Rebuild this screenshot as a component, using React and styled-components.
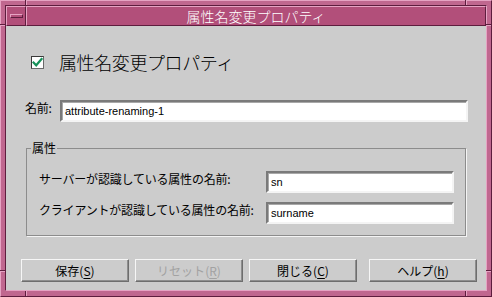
import React from 'react';
import styled, { createGlobalStyle } from 'styled-components';

const LIGHT = '#e6a3c3';
const DARK = '#5e1d3e';
const PINK = '#c0678f';
const TITLE = '#b24f7a';
const GRAY = '#cccccc';

const Global = createGlobalStyle`
  html, body { margin: 0; padding: 0; background: ${PINK}; }
  body { font-family: "Noto Sans CJK JP", "Liberation Sans", sans-serif; }
  * { box-sizing: border-box; }
`;

const Frame = styled.div`
  position: relative;
  width: 492px;
  height: 297px;
  background: ${PINK};
  border: 1px solid;
  border-color: ${LIGHT} ${DARK} ${DARK} ${LIGHT};
  padding: 4px 4px 5px 4px;
  display: flex;
`;

const Mark = styled.span`
  position: absolute;
  background: ${(p) => p.$c};
  width: ${(p) => (p.$v ? '1px' : '5px')};
  height: ${(p) => (p.$v ? '5px' : '1px')};
`;

const Inner = styled.div`
  flex: 1;
  display: flex;
  flex-direction: column;
  border: 1px solid;
  border-color: ${DARK} ${LIGHT} ${LIGHT} ${DARK};
`;

const TitleBar = styled.div`
  height: 20px;
  display: flex;
  background: ${TITLE};
`;

const MenuButton = styled.div`
  width: 20px;
  display: flex;
  align-items: center;
  justify-content: center;
  border: 1px solid;
  border-color: ${LIGHT} ${DARK} ${DARK} ${LIGHT};
`;

const MenuBar = styled.div`
  width: 13px;
  height: 4px;
  border: 1px solid;
  border-color: ${LIGHT} ${DARK} ${DARK} ${LIGHT};
`;

const TitleArea = styled.div`
  flex: 1;
  display: flex;
  align-items: center;
  justify-content: center;
  color: #ffffff;
  font-size: 14px;
  font-weight: 300;
  line-height: 18px;
  border: 1px solid;
  border-color: ${LIGHT} ${DARK} ${DARK} ${LIGHT};
`;

const Content = styled.div`
  flex: 1;
  background: ${GRAY};
  display: flex;
  flex-direction: column;
  color: #000;
`;

const CheckRow = styled.div`
  margin-top: 24px;
  height: 24px;
  padding-left: 25px;
  display: flex;
  align-items: center;
  gap: 15px;
`;

const CheckBox = styled.span`
  width: 13px;
  height: 13px;
  background: #ffffff;
  border: 1px solid;
  border-color: #3a3a3a #6a6a6a #6a6a6a #3a3a3a;
  display: flex;
  align-items: center;
  justify-content: center;
`;

const Heading = styled.span`
  font-size: 18px;
  font-weight: 300;
  line-height: 24px;
  letter-spacing: -0.4px;
`;

const FieldRow = styled.div`
  display: flex;
  align-items: center;
  height: 22px;
  margin-top: ${(p) => p.$top || 0}px;
  padding-left: ${(p) => p.$left || 0}px;
  padding-right: ${(p) => p.$right || 0}px;
`;

const Label = styled.span`
  font-size: 12px;
  line-height: 14px;
  padding-bottom: 6px;
  white-space: nowrap;
  letter-spacing: -0.2px;
  width: ${(p) => (p.$w ? `${p.$w}px` : 'auto')};
  flex: ${(p) => (p.$w ? 'none' : '1')};
`;

const TextField = styled.div`
  height: 22px;
  width: ${(p) => (p.$w ? `${p.$w}px` : 'auto')};
  flex: ${(p) => (p.$w ? 'none' : '1')};
  background: #ffffff;
  border: 2px solid;
  border-color: #7a7a7a #f4f4f4 #f4f4f4 #7a7a7a;
  box-shadow: inset 1px 1px 0 #a8a8a8;
  padding-left: 3px;
  display: flex;
  align-items: center;
  font-family: "Liberation Sans", Arial, sans-serif;
  font-size: 11px;
`;

const Group = styled.fieldset`
  margin: 19px 20px 0 20px;
  padding: 16px 11px 11px 4px;
  border: 1px solid #8c8c8c;
  box-shadow: 1px 1px 0 #f4f4f4;
  display: flex;
  flex-direction: column;
  gap: 9px;
  min-width: 0;
`;

const Legend = styled.legend`
  font-size: 12px;
  line-height: 14px;
  padding: 0 1px;
`;

const ButtonRow = styled.div`
  margin-top: 23px;
  padding-left: 15px;
  display: flex;
  gap: 6px;
`;

const Button = styled.div`
  width: 108px;
  height: 23px;
  margin-left: ${(p) => p.$gap || 0}px;
  background: ${GRAY};
  border: 1px solid;
  border-color: #f6f6f6 #6e6e6e #6e6e6e #f6f6f6;
  box-shadow: inset -1px -1px 0 #8e8e8e;
  display: flex;
  align-items: center;
  justify-content: center;
  font-size: 12px;
  line-height: 14px;
  color: ${(p) => (p.$disabled ? '#a2a2a2' : '#000')};
`;

const Mnemonic = styled.span`
  text-decoration: underline;
  text-underline-offset: 2px;
`;

const Check = () => (
  <svg width="11" height="11" viewBox="0 0 11 11">
    <polyline points="1.5,5.5 4.2,8.3 9.5,2" fill="none" stroke="#16915a" strokeWidth="2.2" strokeLinecap="square" />
  </svg>
);

const marks = [
  { left: 25, top: 0, v: true, c: DARK },
  { left: 26, top: 0, v: true, c: LIGHT },
  { left: 465, top: 0, v: true, c: DARK },
  { left: 466, top: 0, v: true, c: LIGHT },
  { left: 25, top: 291, v: true, c: DARK },
  { left: 26, top: 291, v: true, c: LIGHT },
  { left: 465, top: 291, v: true, c: DARK },
  { left: 466, top: 291, v: true, c: LIGHT },
  { left: 0, top: 24, c: DARK },
  { left: 0, top: 25, c: LIGHT },
  { left: 0, top: 270, c: DARK },
  { left: 0, top: 271, c: LIGHT },
  { left: 486, top: 24, c: DARK },
  { left: 486, top: 25, c: LIGHT },
  { left: 486, top: 270, c: DARK },
  { left: 486, top: 271, c: LIGHT },
];

const ButtonLabel = ({ text, m }) => (
  <>
    {text}(<Mnemonic>{m}</Mnemonic>)
  </>
);

export default function App() {
  return (
    <>
      <Global />
      <Frame>
        {marks.map((m, i) => (
          <Mark key={i} $v={m.v} $c={m.c} style={{ left: m.left - 1, top: m.top - 1 }} />
        ))}
        <Inner>
          <TitleBar>
            <MenuButton>
              <MenuBar />
            </MenuButton>
            <TitleArea>属性名変更プロパティ</TitleArea>
          </TitleBar>
          <Content>
            <CheckRow>
              <CheckBox>
                <Check />
              </CheckBox>
              <Heading>属性名変更プロパティ</Heading>
            </CheckRow>
            <FieldRow $top={26} $left={19} $right={18}>
              <Label $w={35}>名前:</Label>
              <TextField>attribute-renaming-1</TextField>
            </FieldRow>
            <Group>
              <Legend>属性</Legend>
              <FieldRow $left={8}>
                <Label>サーバーが認識している属性の名前:</Label>
                <TextField $w={188}>sn</TextField>
              </FieldRow>
              <FieldRow $left={8}>
                <Label>クライアントが認識している属性の名前:</Label>
                <TextField $w={188}>surname</TextField>
              </FieldRow>
            </Group>
            <ButtonRow>
              <Button><ButtonLabel text="保存" m="S" /></Button>
              <Button $disabled><ButtonLabel text="リセット" m="R" /></Button>
              <Button><ButtonLabel text="閉じる" m="C" /></Button>
              <Button $gap={6}><ButtonLabel text="ヘルプ" m="h" /></Button>
            </ButtonRow>
          </Content>
        </Inner>
      </Frame>
    </>
  );
}
